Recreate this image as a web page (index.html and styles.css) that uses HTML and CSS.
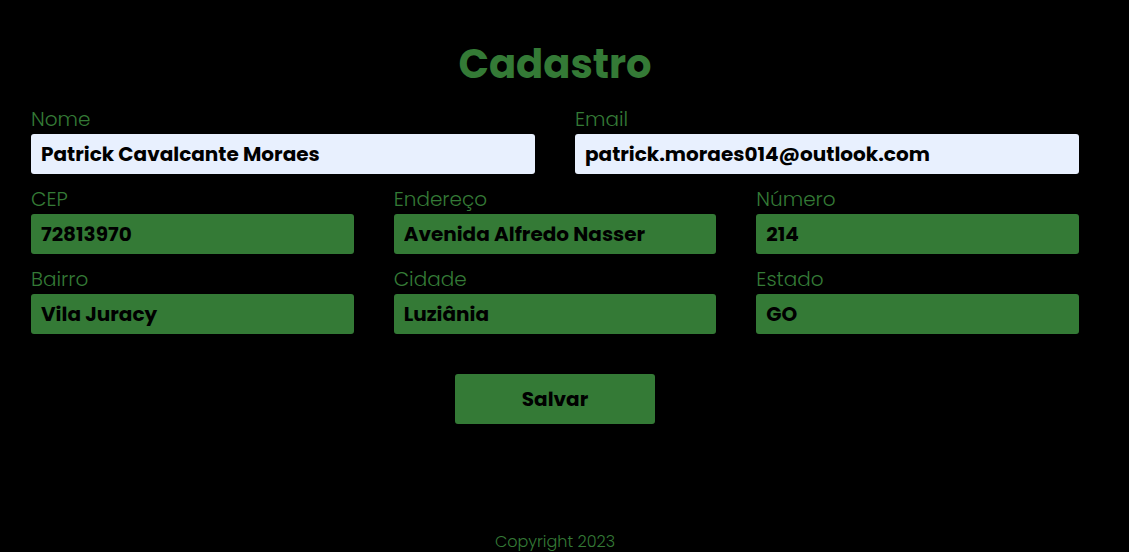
FILE: index.html
```html
<!DOCTYPE html>
<html lang="pt-BR">
<head>
<meta charset="utf-8">
<title>Cadastro</title>
<link rel="stylesheet" href="styles.css">
</head>
<body>
<div class="page">
  <h1 class="title">Cadastro</h1>
  <form class="form">
    <div class="row row-2">
      <div class="field">
        <label class="label" for="nome">Nome</label>
        <input class="input input-light" id="nome" type="text" value="Patrick Cavalcante Moraes">
      </div>
      <div class="field">
        <label class="label" for="email">Email</label>
        <input class="input input-light" id="email" type="text" value="patrick.moraes014@outlook.com">
      </div>
    </div>
    <div class="row row-3">
      <div class="field">
        <label class="label" for="cep">CEP</label>
        <input class="input" id="cep" type="text" value="72813970">
      </div>
      <div class="field">
        <label class="label" for="endereco">Endereço</label>
        <input class="input" id="endereco" type="text" value="Avenida Alfredo Nasser">
      </div>
      <div class="field">
        <label class="label" for="numero">Número</label>
        <input class="input" id="numero" type="text" value="214">
      </div>
    </div>
    <div class="row row-3">
      <div class="field">
        <label class="label" for="bairro">Bairro</label>
        <input class="input" id="bairro" type="text" value="Vila Juracy">
      </div>
      <div class="field">
        <label class="label" for="cidade">Cidade</label>
        <input class="input" id="cidade" type="text" value="Luziânia">
      </div>
      <div class="field">
        <label class="label" for="estado">Estado</label>
        <input class="input" id="estado" type="text" value="GO">
      </div>
    </div>
    <div class="actions">
      <button class="button" type="button">Salvar</button>
    </div>
  </form>
  <footer class="footer">Copyright 2023</footer>
</div>
</body>
</html>
```

FILE: styles.css
```css
* {
  box-sizing: border-box;
}

html, body {
  margin: 0;
  padding: 0;
  background: #000;
}

body {
  font-family: "Poppins", "Open Sans", sans-serif;
  color: #347a36;
}

.page {
  width: 1110px;
  min-height: 552px;
  display: flex;
  flex-direction: column;
  align-items: center;
}

.title {
  margin: 34px 0 11px;
  font-size: 40px;
  line-height: 60px;
  font-weight: 700;
  color: #347a36;
}

.form {
  width: 1048px;
  display: flex;
  flex-direction: column;
  gap: 11px;
}

.row {
  display: grid;
  column-gap: 40px;
}

.row-2 {
  grid-template-columns: 1fr 1fr;
}

.row-3 {
  grid-template-columns: 1fr 1fr 1fr;
}

.field {
  display: flex;
  flex-direction: column;
}

.label {
  display: block;
  height: 29px;
  font-size: 20px;
  line-height: 29px;
  font-weight: 300;
  color: #347a36;
}

.input {
  height: 40px;
  width: 100%;
  border: none;
  border-radius: 3px;
  padding: 0 10px;
  background: #347a36;
  color: #000;
  font-family: inherit;
  font-size: 20px;
  font-weight: 700;
  outline: none;
}

.input-light {
  background: #e8f0fe;
}

.actions {
  display: flex;
  justify-content: center;
  margin-top: 29px;
}

.button {
  width: 200px;
  height: 50px;
  border: none;
  border-radius: 3px;
  background: #347a36;
  color: #000;
  font-family: inherit;
  font-size: 20px;
  font-weight: 700;
}

.footer {
  margin-top: auto;
  font-size: 16px;
  line-height: 20px;
  font-weight: 300;
  color: #347a36;
}
```
